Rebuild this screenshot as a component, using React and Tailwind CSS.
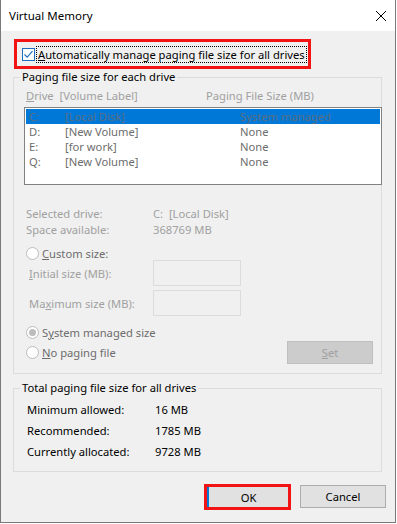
import React from "react";

const font = { fontFamily: '"Noto Sans", "Open Sans", sans-serif' };

function Radio({ checked }) {
  return (
    <span className="relative flex h-[13px] w-[13px] shrink-0 items-center justify-center rounded-full border border-[#bcbcbc] bg-white">
      {checked && <span className="h-[7px] w-[7px] rounded-full bg-[#bcbcbc]" />}
    </span>
  );
}

const drives = [
  { d: "C:", label: "[Local Disk]", size: "System managed", selected: true },
  { d: "D:", label: "[New Volume]", size: "None" },
  { d: "E:", label: "[for work]", size: "None" },
  { d: "Q:", label: "[New Volume]", size: "None" },
];

export default function App() {
  return (
    <div
      className="flex h-[524px] w-[397px] flex-col bg-white text-[11.2px] leading-[15px] text-black"
      style={font}
    >
      <div className="flex h-[523px] w-[396px] flex-col border border-t-0 border-[#7a7a7a] bg-[#f0f0f0]">
        {/* title bar */}
        <div className="flex h-[31px] shrink-0 items-center justify-between bg-white pl-[8px] pr-[8px]">
          <span className="text-[11.5px]">Virtual Memory</span>
          <svg width="12" height="12" viewBox="0 0 12 12">
            <path d="M1 1 L11 11 M11 1 L1 11" stroke="#000" strokeWidth="1" />
          </svg>
        </div>

        {/* auto manage checkbox */}
        <div className="ml-[13px] mt-[8px] flex h-[30px] w-[297px] items-center border-[3px] border-[#f21414] pl-[5px]">
          <span className="flex h-[13px] w-[13px] shrink-0 items-center justify-center border border-[#1e6fbf] bg-white">
            <svg width="11" height="11" viewBox="0 0 11 11">
              <path d="M1.5 5.5 L4.2 8.2 L9.5 2.2" stroke="#1e6fbf" strokeWidth="1.2" fill="none" />
            </svg>
          </span>
          <span className="ml-[1px] whitespace-nowrap border border-dotted border-black px-[1px] leading-[15px]">
            <span className="underline">A</span>utomatically manage paging file size for all drives
          </span>
        </div>

        {/* group 1 */}
        <fieldset className="ml-[12px] mt-[1px] h-[304px] w-[369px] min-w-0 border border-[#dcdcdc] px-0">
          <legend className="ml-[6px] px-[2px] leading-[14px]">Paging file size for each drive</legend>
          <div className="mt-[4px] flex text-[#a0a0a0]">
            <span className="ml-[12px] w-[180px]">
              <span className="underline">D</span>rive&nbsp; [Volume Label]
            </span>
            <span>Paging File Size (MB)</span>
          </div>
          <div className="ml-[10px] mt-[4px] h-[78px] w-[358px] border border-[#828282] bg-white p-[1px] text-[#6d6d6d]">
            {drives.map((r) => (
              <div
                key={r.d}
                className={`flex h-[15px] items-center pl-[3px] ${r.selected ? "bg-[#0078d7] text-[#5b6e82]" : ""}`}
              >
                <span className="w-[36px]">{r.d}</span>
                <span className="w-[175px]">{r.label}</span>
                <span>{r.size}</span>
              </div>
            ))}
          </div>

          <div className="mt-[20px] flex flex-col text-[#a0a0a0]">
            <div className="flex h-[16px] items-center">
              <span className="ml-[12px] w-[127px]">Selected drive:</span>
              <span>C:&nbsp; [Local Disk]</span>
            </div>
            <div className="flex h-[16px] items-center">
              <span className="ml-[12px] w-[127px]">Space available:</span>
              <span>368769 MB</span>
            </div>
          </div>

          <div className="ml-[12px] mt-[8px] flex h-[16px] items-center gap-[3px] text-[#6d6d6d]">
            <Radio />
            <span>
              <span className="underline">C</span>ustom size:
            </span>
          </div>

          <div className="mt-[-1px] flex h-[26px] items-center text-[#a0a0a0]">
            <span className="ml-[15px] w-[124px]">
              <span className="underline">I</span>nitial size (MB):
            </span>
            <span className="h-[26px] w-[88px] border border-[#dcdcdc]" />
          </div>
          <div className="mt-[4px] flex h-[26px] items-center text-[#a0a0a0]">
            <span className="ml-[15px] w-[124px]">
              Ma<span className="underline">x</span>imum size (MB):
            </span>
            <span className="h-[26px] w-[88px] border border-[#dcdcdc]" />
          </div>

          <div className="ml-[12px] mt-[8px] flex h-[16px] items-center gap-[3px] text-[#6d6d6d]">
            <Radio checked />
            <span>
              S<span className="underline">y</span>stem managed size
            </span>
          </div>
          <div className="mt-[1px] flex items-center">
            <div className="ml-[12px] flex h-[16px] items-center gap-[3px] text-[#6d6d6d]">
              <Radio />
              <span>
                <span className="underline">N</span>o paging file
              </span>
            </div>
            <div className="ml-auto mr-[8px] flex h-[23px] w-[86px] items-center justify-center border border-[#bfbfbf] bg-[#cccccc] text-[#a0a0a0]">
              <span>
                <span className="underline">S</span>et
              </span>
            </div>
          </div>
        </fieldset>

        {/* group 2 */}
        <fieldset className="ml-[12px] mt-[7px] h-[91px] w-[369px] min-w-0 border border-[#dcdcdc] px-0">
          <legend className="ml-[6px] px-[2px] leading-[14px]">Total paging file size for all drives</legend>
          <div className="ml-[13px] mt-[7px] flex flex-col gap-[6px]">
            <div className="flex h-[15px] items-center">
              <span className="w-[128px]">Minimum allowed:</span>
              <span>16 MB</span>
            </div>
            <div className="flex h-[15px] items-center">
              <span className="w-[128px]">Recommended:</span>
              <span>1785 MB</span>
            </div>
            <div className="flex h-[15px] items-center">
              <span className="w-[128px]">Currently allocated:</span>
              <span>9728 MB</span>
            </div>
          </div>
        </fieldset>

        {/* buttons */}
        <div className="mt-[12px] flex justify-end gap-[9px] pr-[9px]">
          <div className="flex h-[26px] w-[87px] border-[3px] border-[#f21414]">
            <div className="flex flex-1 items-center justify-center border-l-2 border-[#0078d7] bg-[#e1e1e1]">
              OK
            </div>
          </div>
          <div className="mt-[1px] flex h-[23px] w-[86px] items-center justify-center border border-[#adadad] bg-[#e1e1e1]">
            Cancel
          </div>
        </div>
      </div>
    </div>
  );
}
